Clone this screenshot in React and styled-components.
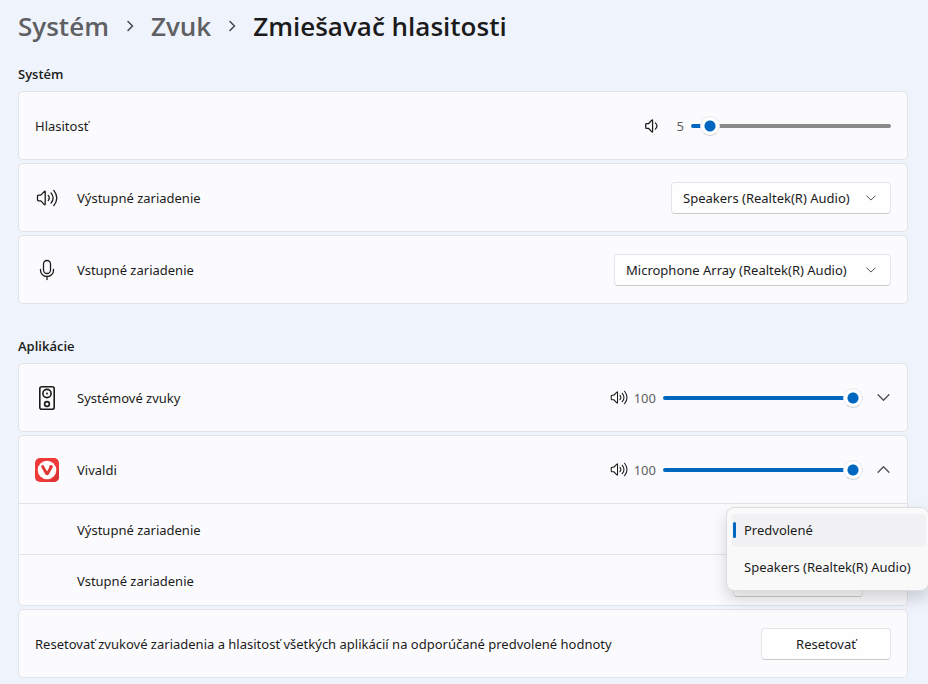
import { useState } from 'react'
import styled, { createGlobalStyle } from 'styled-components'

const colors = {
  page: '#eff3fb',
  card: '#fbfbfd',
  border: '#e2e4e9',
  text: '#1b1b1b',
  muted: '#5f6063',
  accent: '#0067c0',
  track: '#8a8a8a',
}

const GlobalStyle = createGlobalStyle`
  * {
    box-sizing: border-box;
  }

  body {
    margin: 0;
    background: ${colors.page};
    color: ${colors.text};
    font: 13px/20px 'Noto Sans', 'Open Sans', sans-serif;
    overflow-x: hidden;
  }

  button,
  select {
    font: inherit;
    color: inherit;
  }
`

const Page = styled.main`
  padding: 6px 20px 6px 18px;
`

const Breadcrumbs = styled.nav`
  display: flex;
  align-items: center;
  gap: 15px;
  height: 40px;
  font-family: 'Open Sans', sans-serif;
  font-size: 26px;
  font-weight: 600;
  line-height: 40px;
`

const Crumb = styled.a`
  color: ${colors.muted};
  text-decoration: none;
`

const CurrentPage = styled.h1`
  margin: 0;
  font: inherit;
`

const Section = styled.section`
  display: flex;
  flex-direction: column;
  gap: 3px;
  padding-top: ${(props) => (props.$first ? '18px' : '32px')};
`

const SectionTitle = styled.h2`
  margin: 0 0 4px;
  font-family: 'Open Sans', sans-serif;
  font-size: 13px;
  line-height: 20px;
  font-weight: 600;
`

const Card = styled.div`
  background: ${colors.card};
  border: 1px solid ${colors.border};
  border-radius: 5px;
`

const Row = styled.div`
  display: flex;
  align-items: center;
  gap: 18px;
  min-height: 67px;
  padding: 0 16px;
`

const SubRow = styled.div`
  display: flex;
  align-items: center;
  min-height: 51px;
  padding: 1px 44px 0 58px;
  border-top: 1px solid ${colors.border};
`

const IconBox = styled.span`
  display: flex;
  align-items: center;
  justify-content: center;
  width: 24px;
  height: 24px;
`

const Label = styled.label`
  flex: 1;
`

const Volume = styled.div`
  display: flex;
  align-items: center;
`

const VolumeValue = styled.output`
  min-width: 25px;
  padding-left: 6px;
  margin-right: 7px;
  color: ${colors.muted};
  text-align: right;
`

const Range = styled.input`
  appearance: none;
  width: 200px;
  height: 20px;
  margin: 0;
  background: transparent;

  &::-webkit-slider-runnable-track {
    height: 4px;
    border-radius: 2px;
    background: linear-gradient(
      to right,
      ${colors.accent} var(--fill),
      ${colors.track} var(--fill)
    );
  }

  &::-webkit-slider-thumb {
    appearance: none;
    width: 20px;
    height: 20px;
    margin-top: -8px;
    border: 1px solid #ececee;
    border-bottom-color: #cfcfd1;
    border-radius: 50%;
    background: radial-gradient(circle, ${colors.accent} 5px, #fff 6px);
  }
`

const ToggleButton = styled.button`
  display: flex;
  align-items: center;
  justify-content: center;
  width: 16px;
  height: 32px;
  margin-left: 12px;
  padding: 0;
  border: 0;
  background: none;
`

const SelectWrap = styled.div`
  display: grid;
  position: relative;
  align-items: center;
  width: ${(props) => props.$width}px;

  > select,
  > svg {
    grid-area: 1 / 1;
  }

  > svg {
    justify-self: end;
    margin-right: 15px;
    pointer-events: none;
  }
`

const Select = styled.select`
  appearance: none;
  width: 100%;
  height: 32px;
  padding: 0 32px 0 11px;
  border: 1px solid #e5e5e8;
  border-bottom-color: #cbcbce;
  border-radius: 4px;
  background: #fefefe;
`

const Menu = styled.div`
  position: absolute;
  z-index: 1;
  top: -7px;
  left: -7px;
  display: flex;
  flex-direction: column;
  gap: 4px;
  width: 203px;
  padding: 6px 2px 6px 5px;
  border: 1px solid #dcdde0;
  border-radius: 8px;
  background: #f9f9fa;
  box-shadow: 0 8px 16px rgba(0, 0, 0, 0.16);
`

const MenuItem = styled.button`
  display: flex;
  align-items: center;
  gap: 8px;
  height: 33px;
  padding: 0 0 0 1px;
  border: 0;
  border-radius: 4px;
  background: ${(props) => (props.$selected ? '#f1f1f3' : 'transparent')};
  text-align: left;
  white-space: nowrap;

  &::before {
    content: '';
    width: 3px;
    height: 16px;
    border-radius: 2px;
    background: ${(props) => (props.$selected ? colors.accent : 'transparent')};
  }
`

const ResetButton = styled.button`
  width: 130px;
  height: 32px;
  padding: 0;
  border: 1px solid #e5e5e8;
  border-bottom-color: #cbcbce;
  border-radius: 4px;
  background: #fefefe;
`

const Chevron = ({ width = 12, direction = 'down', stroke = 1.2 }) => {
  const points = {
    down: 'M1 3.5 6 8.5 11 3.5',
    up: 'M1 8.5 6 3.5 11 8.5',
    right: 'M4 1.5 8.5 6 4 10.5',
  }

  return (
    <svg width={width} height={width} viewBox='0 0 12 12' fill='none' aria-hidden='true'>
      <path
        d={points[direction]}
        stroke='#4c4c4e'
        strokeWidth={stroke}
        strokeLinecap='round'
        strokeLinejoin='round'
      />
    </svg>
  )
}

const speakerPath =
  'M2.5 6.2h2.3L8.4 2.4q.8-.7.8.4v12.4q0 1.1-.8.4L4.8 11.8H2.5a1 1 0 0 1-1-1V7.2a1 1 0 0 1 1-1z'

const SpeakerIcon = ({ width = 22, height = 18, stroke = 1.3 }) => (
  <svg
    width={width}
    height={height}
    viewBox='0 0 22 18'
    fill='none'
    stroke={colors.text}
    strokeWidth={stroke}
    strokeLinecap='round'
    aria-hidden='true'
  >
    <path d={speakerPath} />
    <path d='M12.2 6.4q2.2 2.6 0 5.2M15 3.9q4.2 5.1 0 10.2M17.8 1.4q6 7.6 0 15.2' />
  </svg>
)

const SpeakerLowIcon = () => (
  <svg
    width='15'
    height='16'
    viewBox='0 0 16 18'
    fill='none'
    stroke={colors.text}
    strokeWidth='1.4'
    strokeLinecap='round'
    aria-hidden='true'
  >
    <path d={speakerPath} />
    <path d='M12.3 5.5q3.8 3.5 0 7' />
  </svg>
)

const MicIcon = () => (
  <svg
    width='16'
    height='22'
    viewBox='0 0 16 22'
    fill='none'
    stroke={colors.text}
    strokeWidth='1.3'
    strokeLinecap='round'
    aria-hidden='true'
  >
    <rect x='4.5' y='1.5' width='7' height='13' rx='3.5' />
    <path d='M1.5 10.5v1a6.5 6 0 0 0 13 0v-1M8 17.5v3' />
  </svg>
)

const SpeakerBoxIcon = () => (
  <svg width='16' height='24' viewBox='0 0 16 24' fill='none' stroke={colors.text} aria-hidden='true'>
    <rect x='.8' y='.8' width='14.4' height='22.4' rx='2' strokeWidth='1.6' />
    <circle cx='8' cy='7.5' r='4.1' strokeWidth='1.6' />
    <circle cx='8' cy='7.5' r='1' fill={colors.text} stroke='none' />
    <circle cx='8' cy='18' r='2.4' strokeWidth='1.6' />
  </svg>
)

const VivaldiIcon = () => (
  <svg width='24' height='24' viewBox='0 0 24 24' aria-hidden='true'>
    <rect width='24' height='24' rx='5' fill='#ef3939' />
    <path d='M19 21 24 9v10a5 5 0 0 1-5 5H9z' fill='#d93434' />
    <circle cx='12' cy='12' r='9.3' fill='#fff' />
    <path
      d='M7.6 8.6 11.7 15.7Q12.1 16.2 12.5 15.5L15.4 10.5'
      fill='none'
      stroke='#e03636'
      strokeWidth='2.9'
      strokeLinecap='round'
      strokeLinejoin='round'
    />
    <circle cx='16' cy='8.8' r='1.9' fill='#ef3939' />
  </svg>
)

const VolumeSlider = ({ id, name, initial, icon }) => {
  const [value, setValue] = useState(initial)

  return (
    <Volume>
      {icon}
      <VolumeValue htmlFor={id}>{value}</VolumeValue>
      <Range
        id={id}
        type='range'
        min='0'
        max='100'
        aria-label={name}
        value={value}
        style={{ '--fill': `${value}%` }}
        onChange={(e) => setValue(Number(e.target.value))}
      />
    </Volume>
  )
}

const DeviceSelect = ({ id, width, options }) => (
  <SelectWrap $width={width}>
    <Select id={id}>
      {options.map((option) => (
        <option key={option}>{option}</option>
      ))}
    </Select>
    <Chevron width={10} />
  </SelectWrap>
)

const MenuSelect = ({ id, name, options }) => {
  const [open, setOpen] = useState(true)
  const [selected, setSelected] = useState(options[0])

  const pick = (option) => {
    setSelected(option)
    setOpen(false)
  }

  return (
    <SelectWrap $width={130}>
      <Select
        id={id}
        value={selected}
        onChange={(e) => pick(e.target.value)}
        onMouseDown={(e) => {
          e.preventDefault()
          setOpen(true)
        }}
      >
        {options.map((option) => (
          <option key={option}>{option}</option>
        ))}
      </Select>
      <Chevron width={10} />
      {open && (
        <Menu role='listbox' aria-label={name}>
          {options.map((option) => (
            <MenuItem
              key={option}
              type='button'
              role='option'
              aria-selected={option === selected}
              $selected={option === selected}
              onClick={() => pick(option)}
            >
              {option}
            </MenuItem>
          ))}
        </Menu>
      )}
    </SelectWrap>
  )
}

const AppHeader = ({ id, name, icon, expanded, onToggle }) => (
  <Row>
    <IconBox>{icon}</IconBox>
    <Label htmlFor={id}>{name}</Label>
    <Volume>
      <VolumeSlider
        id={id}
        name={name}
        initial={100}
        icon={<SpeakerIcon width={18} height={15} />}
      />
      <ToggleButton
        type='button'
        aria-label={name}
        aria-expanded={expanded}
        onClick={onToggle}
      >
        <Chevron width={13} direction={expanded ? 'up' : 'down'} />
      </ToggleButton>
    </Volume>
  </Row>
)

const AppCard = ({ id, name, icon, initiallyOpen = false }) => {
  const [expanded, setExpanded] = useState(initiallyOpen)

  return (
    <Card>
      <AppHeader
        id={id}
        name={name}
        icon={icon}
        expanded={expanded}
        onToggle={() => setExpanded(!expanded)}
      />
      {expanded && (
        <>
          <SubRow>
            <Label htmlFor={`${id}-output`}>Výstupné zariadenie</Label>
            <MenuSelect
              id={`${id}-output`}
              name='Výstupné zariadenie'
              options={['Predvolené', 'Speakers (Realtek(R) Audio)']}
            />
          </SubRow>
          <SubRow>
            <Label htmlFor={`${id}-input`}>Vstupné zariadenie</Label>
            <DeviceSelect id={`${id}-input`} width={130} options={['Predvolené']} />
          </SubRow>
        </>
      )}
    </Card>
  )
}

const App = () => (
  <Page>
    <GlobalStyle />
    <Breadcrumbs>
      <Crumb href='#system'>Systém</Crumb>
      <Chevron direction='right' stroke={1.6} />
      <Crumb href='#zvuk'>Zvuk</Crumb>
      <Chevron direction='right' stroke={1.6} />
      <CurrentPage>Zmiešavač hlasitosti</CurrentPage>
    </Breadcrumbs>

    <Section $first>
      <SectionTitle>Systém</SectionTitle>
      <Card>
        <Row>
          <Label htmlFor='volume'>Hlasitosť</Label>
          <VolumeSlider id='volume' name='Hlasitosť' initial={5} icon={<SpeakerLowIcon />} />
        </Row>
      </Card>
      <Card>
        <Row>
          <IconBox>
            <SpeakerIcon />
          </IconBox>
          <Label htmlFor='output'>Výstupné zariadenie</Label>
          <DeviceSelect id='output' width={220} options={['Speakers (Realtek(R) Audio)']} />
        </Row>
      </Card>
      <Card>
        <Row>
          <IconBox>
            <MicIcon />
          </IconBox>
          <Label htmlFor='input'>Vstupné zariadenie</Label>
          <DeviceSelect
            id='input'
            width={277}
            options={['Microphone Array (Realtek(R) Audio)']}
          />
        </Row>
      </Card>
    </Section>

    <Section>
      <SectionTitle>Aplikácie</SectionTitle>
      <AppCard id='system-sounds' name='Systémové zvuky' icon={<SpeakerBoxIcon />} />
      <AppCard id='vivaldi' name='Vivaldi' icon={<VivaldiIcon />} initiallyOpen />
      <Card>
        <Row>
          <Label as='span'>
            Resetovať zvukové zariadenia a hlasitosť všetkých aplikácií na odporúčané
            predvolené hodnoty
          </Label>
          <ResetButton type='button'>Resetovať</ResetButton>
        </Row>
      </Card>
    </Section>
  </Page>
)

export default App
